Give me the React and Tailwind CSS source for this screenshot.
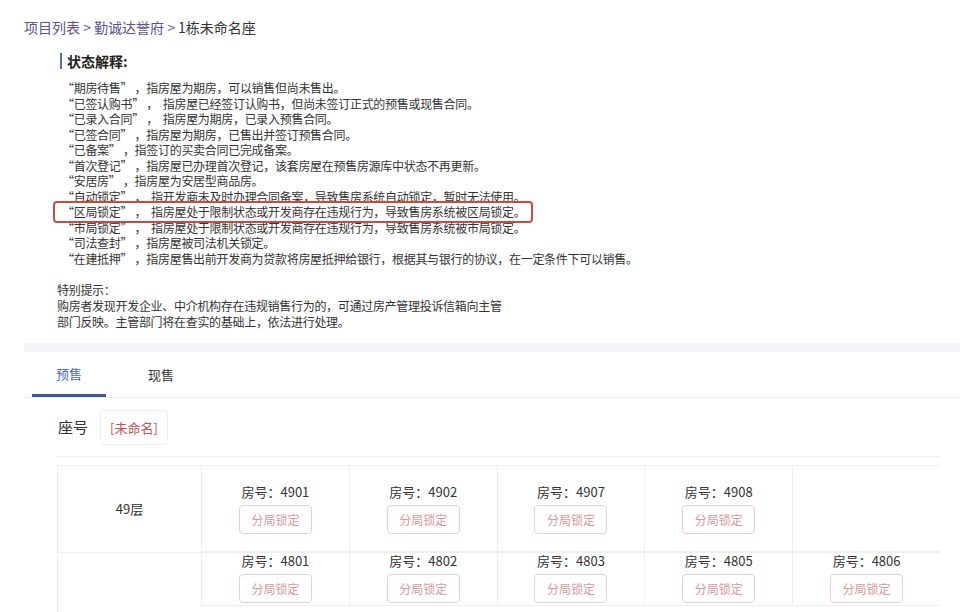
import React from 'react';

const STATUS_LINES = [
  '“期房待售” ，指房屋为期房，可以销售但尚未售出。',
  '“已签认购书” ，  指房屋已经签订认购书，但尚未签订正式的预售或现售合同。',
  '“已录入合同” ，  指房屋为期房，已录入预售合同。',
  '“已签合同” ，指房屋为期房，已售出并签订预售合同。',
  '“已备案” ，指签订的买卖合同已完成备案。',
  '“首次登记” ，指房屋已办理首次登记，该套房屋在预售房源库中状态不再更新。',
  '“安居房” ，指房屋为安居型商品房。',
  '“自动锁定” ，  指开发商未及时办理合同备案，导致售房系统自动锁定，暂时无法使用。',
  '“区局锁定” ，  指房屋处于限制状态或开发商存在违规行为，导致售房系统被区局锁定。',
  '“市局锁定” ，  指房屋处于限制状态或开发商存在违规行为，导致售房系统被市局锁定。',
  '“司法查封” ，指房屋被司法机关锁定。',
  '“在建抵押” ，指房屋售出前开发商为贷款将房屋抵押给银行，根据其与银行的协议，在一定条件下可以销售。',
];

// 48层的楼层名在可视区以下，不显示
const FLOORS = [
  { label: '49层', rooms: ['4901', '4902', '4907', '4908', null] },
  { label: '', rooms: ['4801', '4802', '4803', '4805', '4806'] },
];

function RoomCell({ no, first }) {
  return (
    <div className={`border-l border-[#eeeeee] flex flex-col items-center ${first ? 'h-[85px] pt-[18px]' : 'h-[52px] pt-0'}`}>
      {no && (
        <>
          <div className="text-[13px] leading-[16px] text-[#333]">房号：{no}</div>
          <div className="mt-[5px] w-[73px] h-[29px] border border-[#ebcdd0] rounded-sm flex items-center justify-center text-[12px] text-[#d9979e]">
            分局锁定
          </div>
        </>
      )}
    </div>
  );
}

export default function App() {
  return (
    <div className="w-[960px] h-[612px] overflow-hidden bg-white font-[Noto_Sans_CJK_SC,sans-serif] text-[#333]">
      {/* breadcrumb */}
      <div className="pt-[17px] pl-[24px] text-[14px] leading-[20px]">
        <span className="text-[#5d5191]">项目列表 &gt; 勤诚达誉府 &gt; </span>
        <span className="text-[#333]">1栋未命名座</span>
      </div>

      {/* status explanation */}
      <div className="mt-[14px] pl-[60px] flex items-center h-[20px]">
        <div className="w-[2px] h-[16px] bg-[#4d72b5]" />
        <span className="ml-[5px] text-[14px] font-bold text-[#222]">状态解释:</span>
      </div>
      <div className="mt-[9px] pl-[62px] text-[12px] leading-[15.5px] tracking-[-0.3px] text-[#333] whitespace-pre">
        {STATUS_LINES.map((line, i) =>
          i === 8 ? (
            <div key={i} className="relative z-10 -my-[3px] -ml-[9px] w-fit pl-[7px] pr-[6px] py-[1px] border-2 border-[#c84b3d] rounded-[4px] bg-white">
              {line}
            </div>
          ) : (
            <div key={i}>{line}</div>
          )
        )}
      </div>

      <div className="mt-[16px] pl-[57px] text-[12px] leading-[16px] tracking-[-0.3px] text-[#333]">
        <div>特别提示：</div>
        <div>购房者发现开发企业、中介机构存在违规销售行为的，可通过房产管理投诉信箱向主管</div>
        <div>部门反映。主管部门将在查实的基础上，依法进行处理。</div>
      </div>

      {/* divider band */}
      <div className="mt-[13px] ml-[24px] h-[9px] bg-[#f4f4f6]" />

      {/* lower card */}
      <div className="ml-[24px]">
        <div className="flex h-[46px] border-b border-[#eeeeee] pl-[8px]">
          <div className="w-[74px] pt-[2px] flex items-center justify-center text-[13px] text-[#4a6cb3] border-b-[3px] border-[#3d5b9b]">
            预售
          </div>
          <div className="ml-[18px] w-[74px] flex items-center justify-center text-[13px] text-[#333]">
            现售
          </div>
        </div>

        <div className="mt-[12px] pl-[34px] flex items-center">
          <span className="text-[15px] text-[#333]">座号</span>
          <div className="ml-[12px] w-[68px] h-[35px] border border-[#f0f0f0] rounded-sm flex items-center justify-center text-[13px] text-[#c4524e]">
            [未命名]
          </div>
        </div>

        <div className="mt-[11px] ml-[33px] w-[883px] border-t border-[#f0f0f0]" />

        {/* floor table */}
        <div className="mt-[8px] ml-[33px] w-[883px] border-t border-l border-[#eeeeee]">
          {FLOORS.map((floor, fi) => (
            <div key={fi} className="flex border-b border-[#eeeeee]">
              <div className={`w-[143px] flex items-center justify-center text-[13px] text-[#333] ${fi === 0 ? 'h-[85px]' : 'h-[200px]'}`}>
                {floor.label}
              </div>
              <div className="flex-1">
                <div className="grid grid-cols-5 border-b border-[#eeeeee]">
                  {floor.rooms.map((no, ri) => (
                    <RoomCell key={ri} no={no} first={fi === 0} />
                  ))}
                </div>
              </div>
            </div>
          ))}
        </div>
      </div>
    </div>
  );
}
